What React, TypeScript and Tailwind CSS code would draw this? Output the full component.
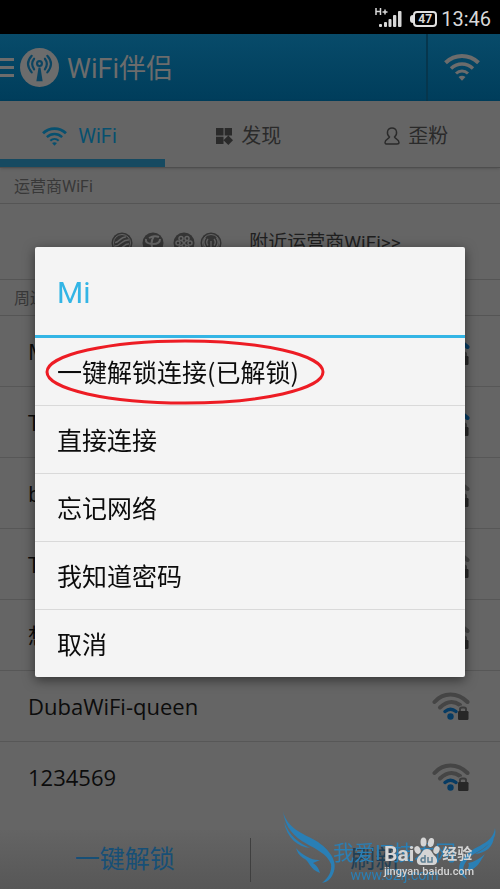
import type { ReactNode } from "react";

const actions = ["一键解锁连接(已解锁)", "直接连接", "忘记网络", "我知道密码", "取消"];

const networks = [
  { name: "Mi", strong: true },
  { name: "TP-LINK", strong: true },
  { name: "baidu", strong: false },
  { name: "Tenda", strong: false },
  { name: "想上网", strong: false },
  { name: "DubaWiFi-queen", strong: false },
  { name: "1234569", strong: false },
];

function WifiIcon({ className }: { className: string }) {
  return (
    <svg viewBox="0 0 36 27" className={className} fill="none" stroke="currentColor" aria-hidden="true">
      <path d="M1.500 8.700C11-.2 25-.2 34.500 8.700" strokeWidth="4" />
      <path d="M7 14.500C13.500 8.500 22.500 8.500 29 14.500" strokeWidth="3.500" />
      <path d="M12 19.500C15.500 16.200 20.500 16.200 24 19.500" strokeWidth="3" />
      <path d="M14.500 23Q18 20.500 21.500 23L18 26.800Z" fill="currentColor" stroke="none" />
    </svg>
  );
}

function LockedSignal({ strong }: { strong: boolean }) {
  return (
    <svg viewBox="0 0 38 30" className="h-[30px] w-[38px]" fill="none" strokeLinecap="round" aria-hidden="true">
      <path d="M2.500 11Q9 3.500 18.500 3.500T35.500 11" stroke={strong ? "#063b63" : "#454545"} strokeWidth="4" />
      <path d="M8 16.500Q18 7 28 14" stroke={strong ? "#063b63" : "#454545"} strokeWidth="4" />
      <path d="M13 20.500Q18.500 16 24 20.500" stroke="#063b63" strokeWidth="3.500" />
      <circle cx="18.500" cy="25.500" r="3.200" fill="#063b63" />
      <path d="M28 21V18Q28 16.500 30 16.500H32Q34 16.500 34 18V21" stroke="#656565" strokeWidth="4" />
      <path d="M28 21V18Q28 16.500 30 16.500H32Q34 16.500 34 18V21" stroke="#3b3b3b" strokeWidth="2" />
      <rect x="26" y="20" width="10.500" height="9" rx="1.200" fill="#272727" />
    </svg>
  );
}

function Antenna({ className }: { className: string }) {
  return (
    <svg viewBox="0 0 40 40" className={className} aria-hidden="true">
      <circle cx="20" cy="20" r="20" fill="#6c6c6c" />
      <g fill="none" stroke="#0b4461" strokeWidth="2.200" strokeLinecap="round">
        <circle cx="20" cy="16" r="2.500" />
        <path d="M14.500 11Q10.500 16 14.500 22M25.500 11Q29.500 16 25.500 22M12 8Q4.500 16 12 25M28 8Q35.500 16 28 25" />
      </g>
      <path d="M19 20H21L23.200 34H16.800Z" fill="#0b4461" />
    </svg>
  );
}

function Carriers() {
  return (
    <svg viewBox="0 0 112 22" className="h-[22px] w-[112px]" fill="none" stroke="#656565" aria-hidden="true">
      <g fill="#353535" stroke="none">
        <circle cx="11" cy="11" r="10.500" />
        <circle cx="42" cy="11" r="10.500" />
        <circle cx="73" cy="11" r="10.500" />
        <circle cx="100" cy="11" r="10.500" />
      </g>
      <circle cx="11" cy="11" r="8.500" strokeWidth="1" />
      <path d="M4 10.500C8 11 10 4 15 5M4 14C10 14 11 7 18 8M7 17C13 17 13 11 18 12" strokeWidth="1.500" />
      <path d="M35 7Q34 12 42 12Q49 12 49 7M43 4Q38 12 43 19M38 6Q43 3 48 5" strokeWidth="2" />
      <g strokeWidth="1.500">
        <circle cx="67" cy="11" r="2" />
        <circle cx="79" cy="11" r="2" />
        <circle cx="70" cy="6.500" r="2" />
        <circle cx="76" cy="6.500" r="2" />
        <circle cx="70" cy="15.500" r="2" />
        <circle cx="76" cy="15.500" r="2" />
        <path d="M70 8L76 14M76 8L70 14" />
      </g>
      <circle cx="100" cy="11" r="8.500" strokeWidth="1" />
      <path d="M97 7Q94.500 10 97 13.500M103 7Q105.500 10 103 13.500M94.500 5.500Q91 10 94.500 15M105.500 5.500Q109 10 105.500 15M100 9V18" strokeWidth="1.400" />
    </svg>
  );
}

function Tab({ active, children }: { active?: boolean; children: ReactNode }) {
  return (
    <button
      role="tab"
      aria-selected={!!active}
      className={
        active
          ? "flex w-[33%] items-center justify-center gap-[11px] border-b-8 border-[#164a61] pt-3 pr-1.5 text-[#07506f]"
          : "flex flex-1 items-center justify-center gap-2 border-b-8 border-transparent pt-3 text-[#2a2a2a]"
      }
    >
      {children}
    </button>
  );
}

function StatusBar() {
  return (
    <div className="flex h-[34px] shrink-0 items-center justify-end gap-1 bg-black pt-1 pr-[9px] text-[#d8d8d8]">
      <svg viewBox="0 0 30 22" className="h-[22px] w-[30px]" fill="currentColor" aria-hidden="true">
        <path d="M4 0V7M8.500 0V7M4 3.500H8.500M10.500 4H15.500M13 1.500V6.500" stroke="currentColor" strokeWidth="1.500" />
        <rect x="7" y="16" width="3" height="3" rx="1" />
        <rect x="12" y="14" width="3" height="5" rx="1" />
        <rect x="16.500" y="11" width="3" height="8" rx="1" />
        <rect x="21" y="7" width="3.300" height="12" rx="1" />
        <rect x="26" y="3" width="3.500" height="16" rx="1" />
      </svg>
      <div className="flex items-center pl-1">
        <span className="h-2 w-[3px] rounded-l-sm bg-[#e0e0e0]" />
        <span className="flex h-4 w-6 items-center justify-center rounded border-2 border-[#e0e0e0] text-[12px] leading-3 font-bold">
          47
        </span>
      </div>
      <span className="text-[20px] leading-6">13:46</span>
    </div>
  );
}

function Watermarks() {
  return (
    <div className="pointer-events-none fixed right-0 bottom-0 h-[80px] w-[220px]" aria-hidden="true">
      <svg viewBox="0 0 220 80" className="absolute inset-0 h-full w-full" fill="#2a7fb5">
        <path d="M3 2C7 20 23 24 38 33C52 43 59 55 52 67C49 72 46 73 42 74C49 68 52 62 51 55C47 45 36 40 27 35C14 28 5 18 3 2Z" />
        <path d="M4 13C10 28 19 34 30 39C18 38 7 29 4 13ZM16 39C22 46 33 52 40 51L33 54C38 57 39 61 40 64C29 60 30 52 23 49C19 46 17 43 16 39Z" />
        <path d="M215 19C213 33 201 35 191 42C180 49 173 62 187 70C181 62 183 56 188 50C192 45 199 43 205 38C212 33 217 28 215 19ZM214 28C209 37 202 41 195 45C206 44 213 38 214 28ZM205 45C199 50 194 53 188 54C190 56 188 59 187 62C198 60 200 52 205 45Z" />
      </svg>
      <div className="absolute top-[30px] left-[53px] text-center whitespace-nowrap text-[#2a7fb5]">
        <p className="text-[21px] leading-7">我爱IT技术网</p>
        <p className="text-[14px] leading-4">www.52ij.com</p>
      </div>
      <div className="absolute top-[33px] left-[104px] whitespace-nowrap text-[#d5d5d5]">
        <div className="flex h-6 items-end">
          <span className="text-[21px] leading-6 font-bold">Bai</span>
          <svg viewBox="0 0 26 29" className="h-[29px] w-[26px]" fill="currentColor">
            <ellipse cx="3.500" cy="13" rx="3" ry="4" transform="rotate(-20 3.500 13)" />
            <ellipse cx="9.500" cy="5" rx="3" ry="4.500" />
            <ellipse cx="17" cy="5.500" rx="3" ry="4.500" transform="rotate(12 17 5.500)" />
            <ellipse cx="22.500" cy="13" rx="3" ry="4" transform="rotate(20 22.500 13)" />
            <path d="M13 12C8 12 8 17 5 19C1 23 3 29 8 28H18C23 29 25 23 21 19C18 17 18 12 13 12Z" />
            <path d="M11 18V25H8Q6 23 8 21H11M14 20V25H18V20" fill="none" stroke="#5c7d91" strokeWidth="1.500" />
          </svg>
          <span className="pl-0.5 text-[15px] leading-6 font-bold">经验</span>
        </div>
        <p className="text-[11px] leading-3 font-medium">jingyan.baidu.com</p>
      </div>
    </div>
  );
}

export default function App() {
  return (
    <div className="flex h-screen min-h-[720px] flex-col overflow-hidden bg-[#656565] font-[Roboto,'Noto_Sans_CJK_SC',sans-serif]">
      <StatusBar />
      <header className="flex h-[67px] shrink-0 items-center bg-linear-to-b from-[#084b6a] to-[#003d5b] text-[#6c6c6c]">
        <button aria-label="菜单" className="flex w-[14px] flex-col gap-[5px]">
          <span className="h-[3px] w-full bg-[#6c6c6c]" />
          <span className="h-[3px] w-full bg-[#6c6c6c]" />
          <span className="h-[3px] w-full bg-[#6c6c6c]" />
        </button>
        <Antenna className="ml-[6px] h-[39px] w-[39px]" />
        <h1 className="ml-2 flex-1 pt-0.5 text-[27px] leading-9">WiFi伴侣</h1>
        <button aria-label="WiFi" className="flex h-full w-[74px] items-center justify-center border-l-2 border-[#06364d] pr-1">
          <WifiIcon className="h-[27px] w-9" />
        </button>
      </header>

      <div role="tablist" className="flex h-[67px] shrink-0 border-b border-[#4e4e4e] text-[20px] leading-6 shadow-sm">
        <Tab active>
          <WifiIcon className="h-[19px] w-[25px]" />
          WiFi
        </Tab>
        <Tab>
          <svg viewBox="0 0 17 17" className="h-[17px] w-[17px]" fill="currentColor" aria-hidden="true">
            <path d="M0 0H7.500V7.500H0ZM8.700 0H16V7.500H8.700ZM0 8.700H7.500V16H0ZM12.300 7.500L17 12.200L12.300 17L7.500 12.200Z" />
          </svg>
          发现
        </Tab>
        <Tab>
          <svg viewBox="0 0 16 18" className="h-[18px] w-4" fill="none" stroke="currentColor" strokeWidth="1.400" aria-hidden="true">
            <path d="M5.500 10C2 7 3 1 8 1S14 7 10.500 10C11 12 15 12 15 15.500Q15 17 13 17H3Q1 17 1 15.500C1 12 5 12 5.500 10Z" />
          </svg>
          歪粉
        </Tab>
      </div>

      <h2 className="h-9 shrink-0 border-b border-[#555555] pt-px pl-[14px] text-[16px] leading-9 text-[#383838]">运营商WiFi</h2>
      <div className="flex h-[76px] shrink-0 items-center justify-center gap-[26px] border-b border-[#555555] pt-[2px] pl-3 text-[19px] leading-6">
        <Carriers />
        <a href="#nearby" className="text-[#1f1f1f]">附近运营商WiFi&gt;&gt;</a>
      </div>
      <h2 className="h-9 shrink-0 border-b border-[#555555] pt-px pl-[14px] text-[16px] leading-9 text-[#383838]">周边WiFi</h2>

      <ul className="min-h-0 flex-1 overflow-hidden font-['Open_Sans','Noto_Sans_CJK_SC',sans-serif]">
        {networks.map((network) => (
          <li key={network.name} className="flex h-[71px] items-center justify-between border-b border-[#575757] pr-[30px] pl-7 text-[22px] leading-8 text-[#0c0c0c] last:border-transparent">
            {network.name}
            <LockedSignal strong={network.strong} />
          </li>
        ))}
      </ul>

      <footer className="flex h-[59px] shrink-0 items-center bg-linear-to-b from-[#646464] to-[#575757] text-[25px] leading-8">
        <button className="h-11 flex-1 border-r border-[#3f3f3f] text-[#174f76]">一键解锁</button>
        <button className="h-11 flex-1 text-[#203f56]">刷新</button>
      </footer>

      <div className="fixed inset-x-0 top-[35px] bottom-0 flex items-center justify-center px-[35px]">
        <section role="dialog" aria-modal="true" aria-labelledby="dialog-title" className="w-full rounded-xs bg-[#f4f4f4] shadow-[0_3px_12px_rgba(0,0,0,0.5)]">
          <h2 id="dialog-title" className="border-b-3 border-[#33b5e5] px-[22px] pt-[26px] pb-[22px] text-[30px] leading-10 text-[#33b5e5]">
            Mi
          </h2>
          <ul className="font-['Noto_Sans_CJK_SC',sans-serif] text-[25px] leading-8 text-[#0c0c0c]">
            {actions.map((action, index) => (
              <li key={action} className="relative border-b border-[#d9d9d9] last:border-0">
                <button className="h-[67px] w-full px-[22px] pb-0.5 text-left">{action}</button>
                {index === 0 && (
                  <svg viewBox="0 0 280 66" className="pointer-events-none absolute top-px left-[10px] h-[66px] w-[280px]" fill="none" aria-hidden="true">
                    <ellipse cx="140" cy="33" rx="138" ry="31" stroke="#ed1c24" strokeWidth="3" />
                  </svg>
                )}
              </li>
            ))}
          </ul>
        </section>
      </div>

      <Watermarks />
    </div>
  );
}
